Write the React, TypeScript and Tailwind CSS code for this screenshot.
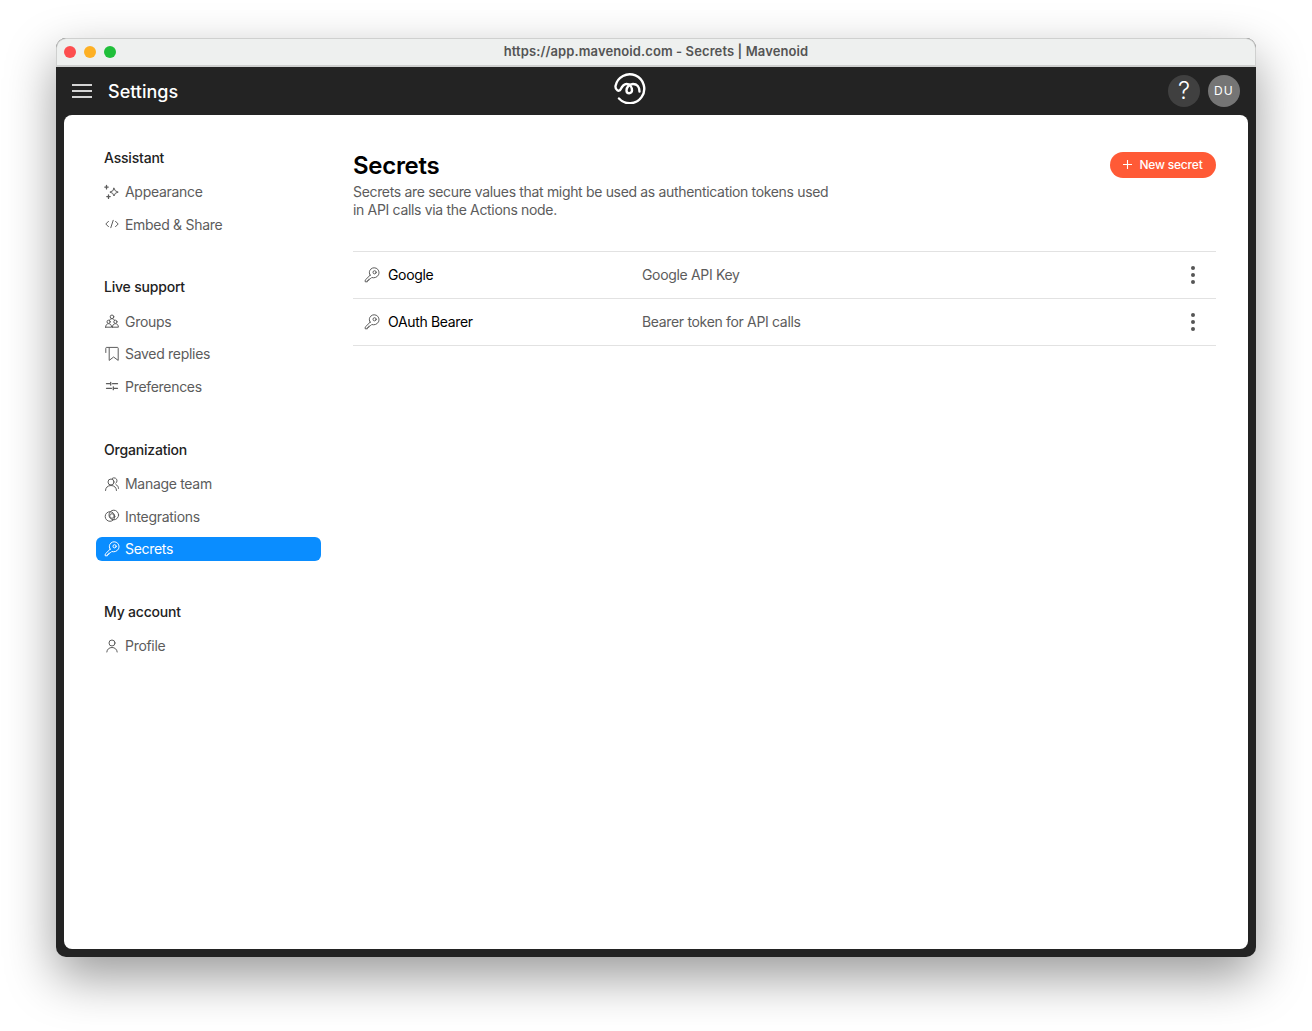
import type { ReactNode } from 'react';

const Icon = ({ children, className = 'text-[#5c5c5c]' }: { children: ReactNode; className?: string }) => (
  <svg viewBox="0 0 16 16" fill="none" stroke="currentColor" strokeWidth="1" strokeLinecap="round" strokeLinejoin="round" className={`w-4 h-4 shrink-0 ${className}`}>
    {children}
  </svg>
);

const KeyIcon = ({ className }: { className?: string }) => (
  <Icon className={className}>
    <path d="M6.100 8.200 1.200 13.100v1.700h2.200v-1.300h1.300v-1.300H6l1.700-1.700c2.600.9 5.600-.3 6.800-2.700 1.200-2.600 0-5.600-2.400-6.600-2.600-1.100-5.300.1-6.400 2.500-.5 1.200-.5 2.900.4 4.500Z" />
    <circle cx="10.600" cy="5.300" r="1.600" />
  </Icon>
);

const icons: Record<string, ReactNode> = {
  Appearance: (
    <Icon>
      <path d="M10 4.200 11.300 6.800l2.900 1.300-2.900 1.200L10 12 8.700 9.300 5.900 8.100l2.800-1.300Z" />
      <path d="M2.500 1.300v3.600M.8 3.100h3.400M4.500 10.800v3.600M2.800 12.600h3.400" strokeWidth="1.300" />
    </Icon>
  ),
  'Embed & Share': (
    <Icon>
      <path d="M4.500 5.300 1.800 8l2.700 2.700M11.500 5.300 14.200 8l-2.700 2.700M9.200 4.300l-2.400 7.400" />
    </Icon>
  ),
  Groups: (
    <Icon>
      <circle cx="8" cy="3.800" r="1.800" />
      <circle cx="4.600" cy="8.800" r="1.600" />
      <circle cx="11.400" cy="8.800" r="1.600" />
      <path d="M5.400 7.400c.2-1 1.300-1.700 2.600-1.700s2.400.7 2.600 1.700M1.600 14.200c0-2.100 1.200-3.500 3-3.500s3 1.400 3 3.500h-6ZM8.400 14.200c0-2.100 1.200-3.500 3-3.500s3 1.400 3 3.500h-6Z" />
    </Icon>
  ),
  'Saved replies': (
    <Icon>
      <path d="M1.800 6.500V2.200c0-.5.3-.8.8-.8h10.800c.5 0 .8.300.8.800v12.200L9.600 11l-4.400 3.400V2" />
    </Icon>
  ),
  Preferences: (
    <Icon>
      <path d="M2.500 5.700h3.200M8.500 5.700h5M2.500 10.300h5M10.300 10.300h3.200" strokeWidth="1.300" />
      <path d="M6.700 4.300v2.800M9.300 8.900v2.800" strokeWidth="1.300" />
    </Icon>
  ),
  'Manage team': (
    <Icon>
      <circle cx="7" cy="6" r="3" />
      <path d="M1.500 14.500c0-3 2.300-5 5.500-5s5.500 2 5.500 5" />
      <path d="M8.200 2.400A3 3 0 0 1 13 4.800c0 1-.5 1.800-1.200 2.400M12 8.600c1.500.7 2.500 2 2.500 3.800" />
    </Icon>
  ),
  Integrations: (
    <Icon>
      <circle cx="6" cy="8.500" r="4.800" />
      <circle cx="9.800" cy="7" r="4.800" />
      <circle cx="8" cy="8" r="2.300" />
    </Icon>
  ),
  Secrets: <KeyIcon className="text-white" />,
  Profile: (
    <Icon>
      <circle cx="8" cy="5" r="3" />
      <path d="M2.800 14c.3-2.800 2.400-4.500 5.200-4.500s4.900 1.700 5.200 4.500" />
    </Icon>
  ),
};

const nav = [
  { title: 'Assistant', items: ['Appearance', 'Embed & Share'] },
  { title: 'Live support', items: ['Groups', 'Saved replies', 'Preferences'] },
  { title: 'Organization', items: ['Manage team', 'Integrations', 'Secrets'] },
  { title: 'My account', items: ['Profile'] },
];

const secrets = [
  { name: 'Google', description: 'Google API Key' },
  { name: 'OAuth Bearer', description: 'Bearer token for API calls' },
];

export default function App() {
  return (
    <div className="w-[1312px] h-[1031px] overflow-hidden bg-white pt-[38px] pl-[56px] font-['Inter',sans-serif]">
      <div className="w-[1200px] h-[919px] flex flex-col rounded-[10px] bg-[#232323] shadow-[0_20px_50px_rgba(0,0,0,0.4)]">
        {/* Browser title bar */}
        <div className="relative h-[29px] shrink-0 flex items-center justify-center rounded-t-[10px] bg-[#eef0ef] border border-b-2 border-[#cfd0cf]">
          <div className="absolute left-[7px] top-[7px] flex gap-2">
            <span className="w-3 h-3 rounded-full bg-[#fd4e4f]" />
            <span className="w-3 h-3 rounded-full bg-[#fdb024]" />
            <span className="w-3 h-3 rounded-full bg-[#1fbf3a]" />
          </div>
          <span className="text-[13px] font-semibold text-[#545454] tracking-[0.1px]">https://app.mavenoid.com - Secrets | Mavenoid</span>
        </div>

        {/* App header */}
        <div className="relative h-[48px] shrink-0 flex items-center px-4 text-white">
          <svg viewBox="0 0 20 16" className="w-5 h-4 text-[#d4d4d4]" fill="none" stroke="currentColor" strokeWidth="2">
            <path d="M0 2h20M0 8h20M0 14h20" />
          </svg>
          <span className="ml-4 text-[18px] font-medium">Settings</span>
          <svg viewBox="0 0 32 32" className="absolute left-[558px] top-[5px] w-8 h-8" fill="none" stroke="currentColor" strokeWidth="2.400" strokeLinecap="round">
            <path d="M5 26.500A14.500 14.500 0 1 0 1.500 14c-.4 4 3.600 6.200 5 3.500C8 14.500 9.500 12 12.500 12c3.300 0 5.500 3 5.500 6.500a2.750 2.750 0 1 1-5.500 0c0-3 2.500-6.500 6.500-6.500 4 0 6.500 3 6.500 7.500" />
          </svg>
          <div className="ml-auto flex gap-2">
            <div className="w-8 h-8 rounded-full bg-[#404040] flex items-center justify-center text-[24px] font-light leading-none">?</div>
            <div className="w-8 h-8 rounded-full bg-[#757575] flex items-center justify-center text-[12px] font-normal tracking-[1.200px]">DU</div>
          </div>
        </div>

        {/* White card */}
        <div className="flex-1 mx-2 mb-2 flex gap-8 rounded-lg bg-white px-8 pt-[32.650px]">
          <aside className="w-[225px] shrink-0 flex flex-col gap-[41.200px]">
            {nav.map((section) => (
              <div key={section.title}>
                <h3 className="h-5 pl-2 mb-[12px] text-[14px] leading-5 font-medium tracking-[-0.2px] text-[#222]">{section.title}</h3>
                <div className="flex flex-col gap-[8.500px]">
                  {section.items.map((item) => (
                    <div
                      key={item}
                      className={`h-6 flex items-center gap-[5px] pl-2 rounded-md text-[14px] tracking-[-0.3px] ${item === 'Secrets' ? 'bg-[#0a8dff] text-white' : 'text-[#5c5c5c]'}`}
                    >
                      {icons[item]}
                      <span>{item}</span>
                    </div>
                  ))}
                </div>
              </div>
            ))}
          </aside>

          <main className="flex-1">
            <div className="flex items-start justify-between h-[103.500px]">
              <div className="pt-[3px]">
                <h1 className="text-[24px] leading-[30px] font-semibold tracking-[-0.3px] text-black">Secrets</h1>
                <p className="w-[480px] mt-[2px] text-[14px] leading-[18px] tracking-[-0.33px] text-[#5c5c5c]">
                  Secrets are secure values that might be used as authentication tokens used in API calls via the Actions node.
                </p>
              </div>
              <button className="mt-[4px] w-[106px] h-[26px] flex items-center justify-center gap-[7px] rounded-full bg-[#ff5a36] text-white text-[12px] font-medium tracking-[-0.2px]">
                <svg viewBox="0 0 10 10" className="w-[9px] h-[9px]" fill="none" stroke="currentColor" strokeWidth="1.200">
                  <path d="M5 0v10M0 5h10" />
                </svg>
                New secret
              </button>
            </div>
            <div className="border-t border-[#e2e2e2]">
              {secrets.map((secret) => (
                <div key={secret.name} className="h-[47px] flex items-center border-b border-[#e2e2e2] text-[14px] tracking-[-0.33px]">
                  <div className="w-[289px] flex items-center gap-2 pl-[11px] text-black">
                    <KeyIcon className="text-[#5c5c5c]" />
                    <span className="mb-[2px]">{secret.name}</span>
                  </div>
                  <span className="mb-[2px] text-[#5c5c5c]">{secret.description}</span>
                  <div className="ml-auto mr-[21px] flex flex-col gap-[3px]">
                    <span className="w-1 h-1 rounded-full bg-[#555]" />
                    <span className="w-1 h-1 rounded-full bg-[#555]" />
                    <span className="w-1 h-1 rounded-full bg-[#555]" />
                  </div>
                </div>
              ))}
            </div>
          </main>
        </div>
      </div>
    </div>
  );
}
